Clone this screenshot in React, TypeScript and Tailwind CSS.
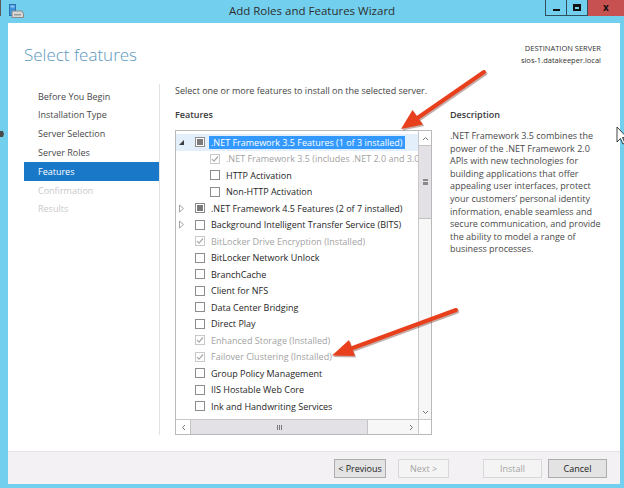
import React from "react";

type BoxState = "empty" | "partial" | "done";
type Row = { level: 0 | 1; exp?: "open" | "closed"; box: BoxState; text: string; dis?: boolean; sel?: boolean };

const rows: Row[] = [
  { level: 0, exp: "open", box: "partial", text: ".NET Framework 3.5 Features (1 of 3 installed)", sel: true },
  { level: 1, box: "done", text: ".NET Framework 3.5 (includes .NET 2.0 and 3.0)", dis: true },
  { level: 1, box: "empty", text: "HTTP Activation" },
  { level: 1, box: "empty", text: "Non-HTTP Activation" },
  { level: 0, exp: "closed", box: "partial", text: ".NET Framework 4.5 Features (2 of 7 installed)" },
  { level: 0, exp: "closed", box: "empty", text: "Background Intelligent Transfer Service (BITS)" },
  { level: 0, box: "done", text: "BitLocker Drive Encryption (Installed)", dis: true },
  { level: 0, box: "empty", text: "BitLocker Network Unlock" },
  { level: 0, box: "empty", text: "BranchCache" },
  { level: 0, box: "empty", text: "Client for NFS" },
  { level: 0, box: "empty", text: "Data Center Bridging" },
  { level: 0, box: "empty", text: "Direct Play" },
  { level: 0, box: "done", text: "Enhanced Storage (Installed)", dis: true },
  { level: 0, box: "done", text: "Failover Clustering (Installed)", dis: true },
  { level: 0, box: "empty", text: "Group Policy Management" },
  { level: 0, box: "empty", text: "IIS Hostable Web Core" },
  { level: 0, box: "empty", text: "Ink and Handwriting Services" },
];

const nav = [
  { t: "Before You Begin" },
  { t: "Installation Type" },
  { t: "Server Selection" },
  { t: "Server Roles" },
  { t: "Features", sel: true },
  { t: "Confirmation", dis: true },
  { t: "Results", dis: true },
];

const desc = [
  ".NET Framework 3.5 combines the",
  "power of the .NET Framework 2.0",
  "APIs with new technologies for",
  "building applications that offer",
  "appealing user interfaces, protect",
  "your customers’ personal identity",
  "information, enable seamless and",
  "secure communication, and provide",
  "the ability to model a range of",
  "business processes.",
];

function Box({ state }: { state: BoxState }) {
  if (state === "done") {
    return (
      <div className="w-[10px] h-[10px] border border-[#c9c9c9] bg-white flex items-center justify-center shrink-0">
        <svg width="8" height="8" viewBox="0 0 8 8">
          <path d="M1 4.2 L3 6.2 L7 1.5" stroke="#a8a8a8" strokeWidth="1.2" fill="none" />
        </svg>
      </div>
    );
  }
  return (
    <div className="w-[10px] h-[10px] border border-[#8c8c8c] bg-white flex items-center justify-center shrink-0">
      {state === "partial" && <div className="w-[6px] h-[6px] bg-[#7a7a7a]" />}
    </div>
  );
}

function Expander({ exp }: { exp?: "open" | "closed" }) {
  if (exp === "open")
    return (
      <svg width="7" height="7" viewBox="0 0 7 7">
        <path d="M6 1 L6 6 L1 6 Z" fill="#3c3c3c" />
      </svg>
    );
  if (exp === "closed")
    return (
      <svg width="7" height="9" viewBox="0 0 7 9">
        <path d="M1.5 1 L5.5 4.5 L1.5 8 Z" fill="none" stroke="#a6a6a6" strokeWidth="1" />
      </svg>
    );
  return null;
}

function Btn({ label, w, dis, cls }: { label: string; w: string; dis?: boolean; cls?: string }) {
  return (
    <div
      className={
        "h-[19px] flex items-center justify-center text-[9px] border " +
        w +
        " " +
        (cls ?? "") +
        " " +
        (dis ? "bg-[#f4f4f4] border-[#d8d8d8] text-[#a4a4a4]" : "bg-[#e3e3e3] border-[#adadad] text-[#222]")
      }
    >
      {label}
    </div>
  );
}

export default function App() {
  return (
    <div className="relative w-[624px] h-[488px] bg-[#72d0ee] flex flex-col overflow-hidden font-['Open_Sans','Noto_Sans',sans-serif]">
      {/* title bar */}
      <div className="h-[23px] grid grid-cols-[1fr_auto_1fr] shrink-0">
        <div className="flex items-start pl-[9px] pt-[4px]">
          <svg width="15" height="14" viewBox="0 0 15 14">
            <rect x="0.5" y="0.5" width="6" height="11" fill="#3d93dc" stroke="#2a6fb0" strokeWidth="1" />
            <rect x="1.5" y="1.5" width="4" height="2" fill="#8cc8f2" />
            <path d="M3 7 L13 7 L14.5 10 L14.5 13.5 L3 13.5 Z" fill="#d8d8d8" stroke="#8a8a8a" strokeWidth="1" />
            <rect x="5" y="10" width="7" height="1.5" fill="#9a9a9a" />
          </svg>
        </div>
        <div className="flex items-center justify-center text-[11.5px] text-[#2e2e2e] pb-[1px]">Add Roles and Features Wizard</div>
        <div className="flex justify-end items-start">
          <div className="w-[22px] h-[16px] border border-t-0 border-[#2f4f5c] flex items-center justify-center">
            <div className="w-[7px] h-[2px] bg-[#111] mt-[4px]" />
          </div>
          <div className="w-[21px] h-[16px] border border-t-0 border-l-0 border-[#2f4f5c] flex items-center justify-center">
            <div className="w-[8px] h-[7px] border-2 border-[#111] border-t-[3px]" />
          </div>
          <div className="w-[36px] h-[16px] bg-[#c75050] flex items-center justify-center text-[10px] font-bold text-[#111] leading-none pb-[2px]">
            x
          </div>
        </div>
      </div>

      {/* window body */}
      <div className="flex-1 ml-[8px] mr-[4px] flex flex-col bg-white">
        {/* header */}
        <div className="h-[61px] flex justify-between shrink-0">
          <div className="pl-[16px] pt-[20px] text-[17px] leading-[24px] font-light text-[#5b97bd]">Select features</div>
          <div className="pr-[19px] pt-[19px] text-right text-[7.5px] leading-[12px] text-[#333]">
            <div>DESTINATION SERVER</div>
            <div>sios-1.datakeeper.local</div>
          </div>
        </div>

        {/* content */}
        <div className="flex-1 flex pb-[16px]">
          {/* nav */}
          <div className="w-[151px] pt-[3px] pl-[16px] shrink-0">
            {nav.map((n) => (
              <div
                key={n.t}
                className={
                  "h-[18.8px] pl-[14px] flex items-center text-[9px] " +
                  (n.sel ? "bg-[#1a78c8] text-white" : n.dis ? "text-[#c9c9c9]" : "text-[#474747]")
                }
              >
                {n.t}
              </div>
            ))}
          </div>
          <div className="w-px bg-[#e3e3e3]" />

          {/* main */}
          <div className="flex-1 pl-[15px] flex flex-col">
            <div className="h-[14px] flex items-center text-[9px] text-[#444]">
              Select one or more features to install on the selected server.
            </div>
            <div className="flex mt-[10px]">
              {/* features column */}
              <div className="w-[257px] flex flex-col shrink-0">
                <div className="h-[14px] flex items-center text-[9px] font-semibold text-[#3a3a3a]">Features</div>
                <div className="mt-[8px] h-[305px] border border-[#b9b9b9] flex flex-col">
                  <div className="flex-1 flex min-h-0">
                    <div className="flex-1 pt-[3px] overflow-hidden">
                      {rows.map((r, i) => (
                        <div
                          key={i}
                          className={
                            "h-[16.5px] flex items-center whitespace-nowrap text-[9px] pl-[2px] " +
                            (r.sel ? "bg-[#e3f0fc]" : "")
                          }
                        >
                          <div className="w-[17px] flex items-center shrink-0">
                            <Expander exp={r.exp} />
                          </div>
                          <div className={r.level === 1 ? "ml-[15px]" : ""}>
                            <Box state={r.box} />
                          </div>
                          <div
                            className={
                              "ml-[4px] px-[2px] " +
                              (r.sel ? "bg-[#3399ff] text-white" : r.dis ? "text-[#a3a3a3]" : "text-[#262626]")
                            }
                          >
                            {r.text}
                          </div>
                        </div>
                      ))}
                    </div>
                    {/* vertical scrollbar */}
                    <div className="w-[13px] border-l border-[#c8c8c8] flex flex-col bg-[#f7f7f7] shrink-0">
                      <div className="h-[14px] bg-white flex items-center justify-center">
                        <svg width="7" height="5" viewBox="0 0 7 5">
                          <path d="M1 4 L3.5 1.5 L6 4" stroke="#777" strokeWidth="1" fill="none" />
                        </svg>
                      </div>
                      <div className="h-[74px] bg-[#e3e1e5] border-y border-[#c3c3c3] flex items-center justify-center">
                        <div className="w-[5px] h-[6px] border-y-2 border-[#8a8a8a] flex items-center">
                          <div className="w-full h-[1px] bg-[#8a8a8a]" />
                        </div>
                      </div>
                      <div className="flex-1" />
                      <div className="h-[13px] flex items-center justify-center">
                        <svg width="7" height="5" viewBox="0 0 7 5">
                          <path d="M1 1 L3.5 3.5 L6 1" stroke="#777" strokeWidth="1" fill="none" />
                        </svg>
                      </div>
                    </div>
                  </div>
                  {/* horizontal scrollbar */}
                  <div className="h-[15px] flex border-t border-[#c8c8c8] shrink-0">
                    <div className="flex-1 flex bg-[#f7f7f7]">
                      <div className="w-[14px] bg-white flex items-center justify-center">
                        <svg width="5" height="7" viewBox="0 0 5 7">
                          <path d="M4 1 L1.5 3.5 L4 6" stroke="#777" strokeWidth="1" fill="none" />
                        </svg>
                      </div>
                      <div className="w-[178px] bg-[#e3e1e5] border-x border-[#c3c3c3] flex items-center justify-center">
                        <div className="flex gap-[1px]">
                          <div className="w-[1px] h-[5px] bg-[#777]" />
                          <div className="w-[1px] h-[5px] bg-[#777]" />
                          <div className="w-[1px] h-[5px] bg-[#777]" />
                        </div>
                      </div>
                      <div className="flex-1" />
                      <div className="w-[14px] flex items-center justify-center">
                        <svg width="5" height="7" viewBox="0 0 5 7">
                          <path d="M1 1 L3.5 3.5 L1 6" stroke="#777" strokeWidth="1" fill="none" />
                        </svg>
                      </div>
                    </div>
                    <div className="w-[13px] border-l border-[#c8c8c8] bg-white" />
                  </div>
                </div>
              </div>

              {/* description */}
              <div className="ml-[18px] flex flex-col">
                <div className="h-[14px] flex items-center text-[9px] font-semibold text-[#3a3a3a]">Description</div>
                <div className="mt-[8px] text-[9px] leading-[12.6px] text-[#4a4a4a] whitespace-nowrap">
                  {desc.map((l) => (
                    <div key={l}>{l}</div>
                  ))}
                </div>
              </div>
            </div>
          </div>
        </div>

        {/* footer */}
        <div className="h-[33px] bg-[#f3f1f4] border-t border-[#e4e4e4] flex items-center justify-end pr-[13px] pt-[1px] shrink-0">
          <Btn label="< Previous" w="w-[52px]" />
          <Btn label="Next >" w="w-[51px]" cls="ml-[12px]" dis />
          <Btn label="Install" w="w-[59px]" cls="ml-[34px]" dis />
          <Btn label="Cancel" w="w-[59px]" cls="ml-[6px]" />
        </div>
      </div>
      <div className="h-[5px] shrink-0" />

      {/* annotations / overlays */}
      <svg className="absolute inset-0 pointer-events-none" width="624" height="488" viewBox="0 0 624 488">
        <line x1="0.5" y1="0" x2="0.5" y2="16" stroke="#5a5a5a" strokeWidth="1" />
        <path d="M0 131 L3 131 L4 134 L3 137 L0 137 Z" fill="#4a4a4a" />
        <g opacity="0.35" transform="translate(1.2 1.6)">
          <line x1="484" y1="72" x2="416" y2="119" stroke="#5a1a10" strokeWidth="4" strokeLinecap="round" />
          <path d="M401 129 L423 124.5 L412.5 110 Z" fill="#5a1a10" />
          <line x1="456" y1="310" x2="350" y2="349" stroke="#5a1a10" strokeWidth="4" strokeLinecap="round" />
          <path d="M332 355.5 L355 356 L349 340 Z" fill="#5a1a10" />
        </g>
        <line x1="484" y1="72" x2="416" y2="119" stroke="#e8401d" strokeWidth="4" strokeLinecap="round" />
        <path d="M401 129 L423 124.5 L412.5 110 Z" fill="#e8401d" />
        <line x1="456" y1="310" x2="350" y2="349" stroke="#e8401d" strokeWidth="4" strokeLinecap="round" />
        <path d="M332 355.5 L355 356 L349 340 Z" fill="#e8401d" />
        {/* mouse cursor at right edge */}
        <path d="M617 127 L617 142 L620.5 138.5 L623 144 L625 143 L622.5 137.5 L627 137.5 Z" fill="#fff" stroke="#111" strokeWidth="0.8" />
      </svg>
    </div>
  );
}
